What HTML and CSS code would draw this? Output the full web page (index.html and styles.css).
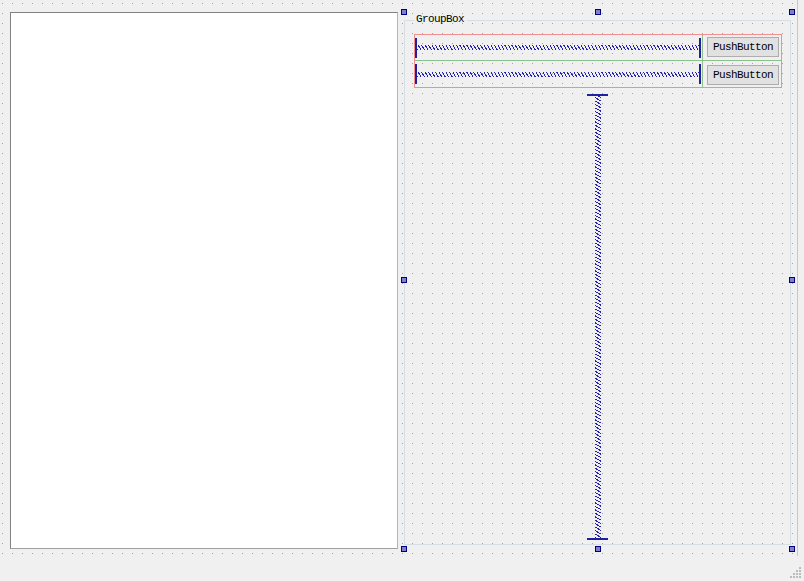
FILE: index.html
```html
<!DOCTYPE html>
<html>
<head>
<meta charset="utf-8">
<title>Form</title>
<link rel="stylesheet" href="styles.css">
</head>
<body>
<div class="window">
  <div class="form">
    <div class="textbox"></div>
    <div class="groupbox">
      <div class="gb-head"><span class="gb-title">GroupBox</span></div>
      <div class="gb-frame">
        <div class="grid">
          <div class="cell c-spacer r1"><div class="hspacer"></div></div>
          <div class="cell c-btn r1"><button class="btn">PushButton</button></div>
          <div class="cell c-spacer r2"><div class="hspacer"></div></div>
          <div class="cell c-btn r2"><button class="btn">PushButton</button></div>
        </div>
        <div class="vspacer"></div>
      </div>
      <span class="handle h-tl"></span>
      <span class="handle h-tm"></span>
      <span class="handle h-tr"></span>
      <span class="handle h-ml"></span>
      <span class="handle h-mr"></span>
      <span class="handle h-bl"></span>
      <span class="handle h-bm"></span>
      <span class="handle h-br"></span>
    </div>
  </div>
  <div class="statusbar">
    <svg class="grip" width="12" height="12" viewBox="0 0 12 12">
      <rect x="9" y="0" width="2" height="2" fill="#bcbcbc"/>
      <rect x="6" y="3" width="2" height="2" fill="#bcbcbc"/>
      <rect x="9" y="3" width="2" height="2" fill="#bcbcbc"/>
      <rect x="3" y="6" width="2" height="2" fill="#bcbcbc"/>
      <rect x="6" y="6" width="2" height="2" fill="#bcbcbc"/>
      <rect x="9" y="6" width="2" height="2" fill="#bcbcbc"/>
      <rect x="0" y="9" width="2" height="2" fill="#bcbcbc"/>
      <rect x="3" y="9" width="2" height="2" fill="#bcbcbc"/>
      <rect x="6" y="9" width="2" height="2" fill="#bcbcbc"/>
      <rect x="9" y="9" width="2" height="2" fill="#bcbcbc"/>
    </svg>
  </div>
</div>
</body>
</html>
```

FILE: styles.css
```css
* { box-sizing: border-box; }

html, body {
  margin: 0;
  padding: 0;
  background: #f0f0f0;
}

body {
  width: 804px;
  height: 582px;
  overflow: hidden;
  font-family: "Liberation Mono", "DejaVu Sans Mono", monospace;
  font-size: 11px;
  letter-spacing: -0.6px;
  color: #000;
}

.window {
  display: flex;
  flex-direction: column;
  width: 804px;
  height: 582px;
}

.form {
  width: 798px;
  height: 556px;
  display: flex;
  align-items: flex-start;
  gap: 6px;
  padding: 12px 0 0 10px;
  border-right: 1px solid #c8c8c8;
  background-color: #f0f0f0;
  background-image: conic-gradient(at 1px 1px, transparent 75%, #a4a4a4 0);
  background-size: 10px 10px;
  background-position: 2px 3px;
}

.textbox {
  width: 388px;
  height: 537px;
  background: #fff;
  border: 1px solid #828282;
  border-right-color: #b4b4b4;
  border-bottom-color: #a0a0a0;
}

.groupbox {
  position: relative;
  width: 388px;
  height: 536px;
  display: flex;
  flex-direction: column;
  padding: 0 1px 3px 0;
}

.gb-head {
  display: flex;
  height: 12px;
}
.gb-head::before {
  content: "";
  width: 9px;
  margin-top: 8px;
  border-top: 1px solid #d5dfe5;
  border-left: 1px solid #d5dfe5;
}
.gb-head::after {
  content: "";
  flex: 1;
  margin-top: 8px;
  border-top: 1px solid #d5dfe5;
  border-right: 1px solid #d5dfe5;
}
.gb-title {
  padding: 1px 3px 0 2px;
  line-height: 12px;
}

.gb-frame {
  flex: 1;
  display: flex;
  flex-direction: column;
  border: 1px solid #d5dfe5;
  border-top: none;
  padding: 10px 0 0 9px;
}

.grid {
  width: 368px;
  height: 54px;
  display: grid;
  grid-template-columns: 288px 78px;
  grid-template-rows: 26px 26px;
  border: 1px solid #f09090;
}

.cell {
  display: flex;
  align-items: center;
}
.c-spacer { border-right: 1px solid #8cc08c; }
.r1 { border-bottom: 1px solid #8cc08c; }
.c-btn { padding-left: 4px; align-items: flex-start; }
.c-btn.r1 { padding-top: 2px; }
.c-btn.r2 { padding-top: 4px; }

.hspacer {
  width: 286px;
  height: 20px;
  border-left: 2px solid #2020a0;
  border-right: 2px solid #2020a0;
  background: repeating-linear-gradient(60deg, #2424b0 0 1px, transparent 1px 3px) center / 100% 5px no-repeat;
}

.btn {
  width: 72px;
  height: 20px;
  padding: 0;
  margin: 0;
  background: #e1e1e1;
  border: 1px solid #adadad;
  font: inherit;
  letter-spacing: inherit;
  color: #000;
}

.vspacer {
  align-self: center;
  margin: 6px 0 0 -9px;
  width: 21px;
  height: 446px;
  border-top: 2px solid #2020a0;
  border-bottom: 2px solid #2020a0;
  background: repeating-linear-gradient(30deg, #2424b0 0 1px, transparent 1px 3px) center / 6px 100% no-repeat;
}

.handle {
  position: absolute;
  width: 6px;
  height: 6px;
  background: #8080c8;
  border: 1px solid #000080;
}
.h-tl { left: -3px; top: -3px; }
.h-tm { left: 191px; top: -3px; }
.h-tr { left: 385px; top: -3px; }
.h-ml { left: -3px; top: 265px; }
.h-mr { left: 385px; top: 265px; }
.h-bl { left: -3px; top: 534px; }
.h-bm { left: 191px; top: 534px; }
.h-br { left: 385px; top: 534px; }

.statusbar {
  flex: 1;
  display: flex;
  justify-content: flex-end;
  align-items: flex-end;
  padding: 0 2px 2px 0;
  background: #f0f0f0;
  border-bottom: 1px solid #d8d8d8;
}
```
